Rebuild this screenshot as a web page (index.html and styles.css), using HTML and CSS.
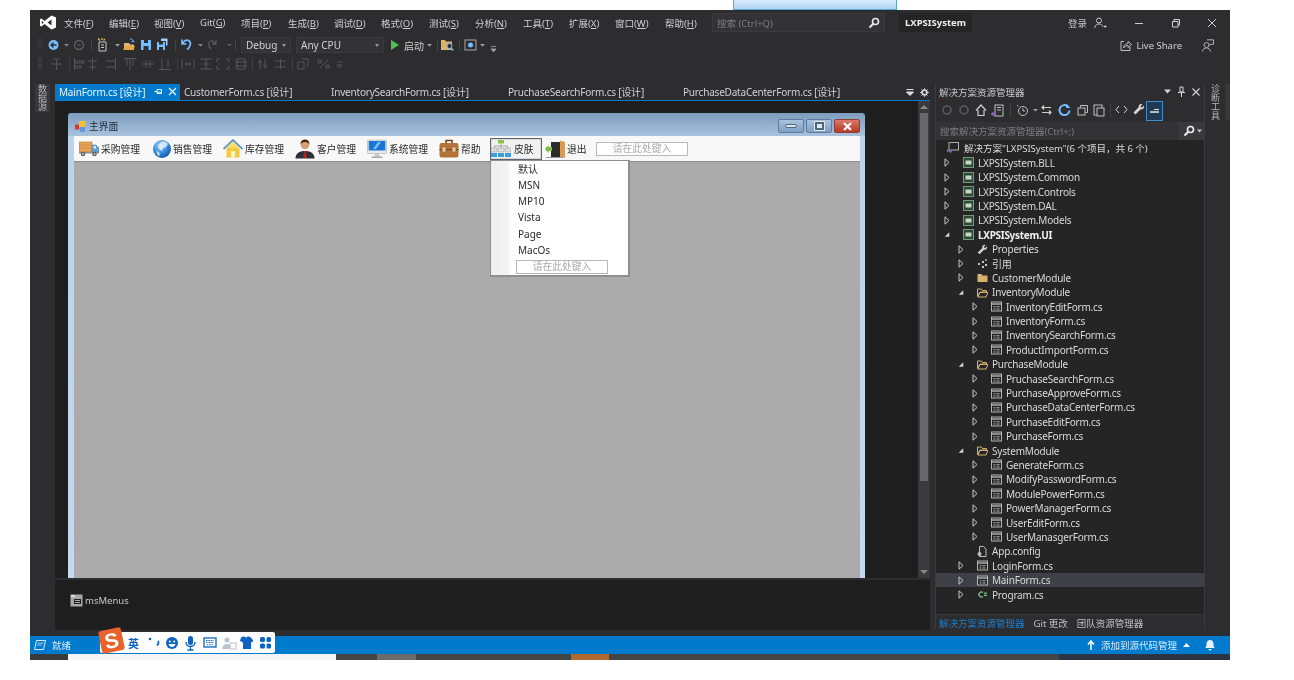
FILE: index.html
```html
<!DOCTYPE html>
<html lang="zh">
<head>
<meta charset="utf-8">
<title>LXPSISystem</title>
<link rel="stylesheet" href="styles.css">
</head>
<body>
<svg class="defs" width="0" height="0">
  <defs>
    <symbol id="closed" viewBox="0 0 6 9"><path d="M1 .8 5 4.500 1 8.200Z" fill="none" stroke="#c8c8c8" stroke-width="1"/></symbol>
    <symbol id="open" viewBox="0 0 8 8"><path d="M7 1V7H1Z" fill="#d8d8d8"/></symbol>
    <symbol id="proj" viewBox="0 0 11 11"><rect x=".5" y=".5" width="10" height="10" fill="#2f4a35" stroke="#6f9b78"/><rect x="2.500" y="3.500" width="6" height="4" fill="#c6d6c8"/></symbol>
    <symbol id="form" viewBox="0 0 11 11"><rect x=".5" y="1" width="10" height="9" fill="#252526" stroke="#b5b5b5"/><path d="M1 3h9" stroke="#b5b5b5" stroke-width="1.400"/><path d="M2.500 5.200h2v1h-2zM2.500 7.500h2v1h-2zM5.500 5.200h3v1h-3zM5.500 7.500h3v1h-3z" fill="#b5b5b5"/></symbol>
    <symbol id="folder" viewBox="0 0 11 10"><path d="M.5 1.500h4l1 1.500h5v6.500h-10Z" fill="#d6b26e"/></symbol>
    <symbol id="folderopen" viewBox="0 0 11 10"><path d="M.5 1.500h4l1 1.500h4v1.500H3L.5 9Z" fill="#252526" stroke="#d6b26e"/><path d="M3 5h8L9 9.500H.8Z" fill="#252526" stroke="#d6b26e"/></symbol>
    <symbol id="wrench" viewBox="0 0 12 12"><path d="M11 2.500 8.800 4.600 7.500 3.400 9.500 1.200C7.500.3 5.200 1.800 5.800 4.300L.8 9.300 2.800 11.200 7.700 6.300C10 7 11.700 4.800 11 2.500Z" fill="#d0d0d0"/></symbol>
  </defs>
</svg>

<div class="topstrip"><div class="chip"></div></div>

<div class="page">
  <div class="vs">
    <header class="menubar">
      <svg class="vslogo" width="18" height="15" viewBox="0 0 18 15"><path d="M12.500.5 17 2.500V12.500L12.500 14.500 5.500 9 2.500 11.500 1 10.700V4.300L2.500 3.500 5.500 6ZM12.500 4.500 8.500 7.500 12.500 10.500ZM2.800 5.800V9.200L4.700 7.500Z" fill="#fff" fill-rule="evenodd"/></svg>
      <nav class="menus">
        <span class="m w45">文件(<u>F</u>)</span><span class="m w45">编辑(<u>E</u>)</span><span class="m w46">视图(<u>V</u>)</span><span class="m w41">Git(<u>G</u>)</span><span class="m w47">项目(<u>P</u>)</span><span class="m w46">生成(<u>B</u>)</span><span class="m w47">调试(<u>D</u>)</span><span class="m w48">格式(<u>O</u>)</span><span class="m w46">测试(<u>S</u>)</span><span class="m w48">分析(<u>N</u>)</span><span class="m w46">工具(<u>T</u>)</span><span class="m w46">扩展(<u>X</u>)</span><span class="m w50">窗口(<u>W</u>)</span><span class="m w47">帮助(<u>H</u>)</span>
      </nav>
      <div class="qsearch"><span>搜索 (Ctrl+Q)</span>
        <svg width="12" height="12" viewBox="0 0 12 12"><circle cx="7.500" cy="4.500" r="3" fill="none" stroke="#e8e8e8" stroke-width="1.600"/><path d="M5.300 6.700 1.500 10.500" stroke="#e8e8e8" stroke-width="2"/></svg>
      </div>
      <div class="solname">LXPSISystem</div>
      <span class="login">登录</span>
      <svg class="usericon" width="13" height="12" viewBox="0 0 13 12"><circle cx="5" cy="3.500" r="2.500" fill="none" stroke="#c8c8c8"/><path d="M.7 11C1 8 3 7 5 7s3.500.8 4.200 3" fill="none" stroke="#c8c8c8"/><path d="M10 9.500h2.500M11.200 8.300v2.500" stroke="#c8c8c8"/></svg>
      <svg class="wmin" width="10" height="10" viewBox="0 0 10 10"><path d="M1 5.500h8" stroke="#d0d0d0"/></svg>
      <svg class="wmax" width="10" height="10" viewBox="0 0 10 10"><path d="M1.500 3.500h5.500v5.500h-5.500zM3 3.500V1.500h5.500V7H7" fill="none" stroke="#d0d0d0"/></svg>
      <svg class="wclose" width="10" height="10" viewBox="0 0 10 10"><path d="M1 1 9 9M9 1 1 9" stroke="#d0d0d0"/></svg>
    </header>

    <div class="tb1">
      <svg class="tb1a" width="206" height="18" viewBox="0 0 206 18">
        <path d="M5 3v12M7 3v12" stroke="#4a4a4d" stroke-dasharray="1 1"/>
        <circle cx="19.500" cy="9" r="5" fill="#75beff"/><path d="M22.500 9h-5M19.500 6.500 17 9l2.500 2.500" stroke="#2d2d30" stroke-width="1.300" fill="none"/>
        <path d="M30 8h5l-2.500 2.500Z" fill="#8a8a8a"/>
        <circle cx="45" cy="9" r="4.500" fill="none" stroke="#5f5f62" stroke-width="1.400"/><path d="M43 9h4" stroke="#5f5f62"/>
        <path d="M57.500 3v12" stroke="#444448"/>
        <path d="M65 6h7v9h-7z" fill="#2d2d30" stroke="#c8c8c8"/><path d="M67 9h3M67 11.500h3" stroke="#c8c8c8"/><path d="M64 2.500l2 2M68 2v2M71 3l-1.500 1.500" stroke="#e6b75f" stroke-width="1.300"/>
        <path d="M81 8h5l-2.500 2.500Z" fill="#a0a0a0"/>
        <path d="M90 7h5l1 1.500h4v5.500H90Z" fill="#dcb67a"/><path d="M96 3c2 0 3 .8 3 2.500M97.500 6l1.500-1 1.500 1" stroke="#75beff" fill="none"/><path d="M89 14l2-4h10l-2 4Z" fill="#e3a93f"/>
        <path d="M107 4h10v10h-10Z" fill="#75beff"/><path d="M110 4h4v3h-4ZM109.500 10h5v4h-5Z" fill="#2d2d30"/>
        <path d="M123 6h8v8h-8Z" fill="#75beff"/><path d="M125 6h4v2.500h-4ZM125 11h4v3h-4Z" fill="#2d2d30"/><path d="M127 2.500h6.500v7H132V5h-5Z" fill="#9ed2ff"/>
        <path d="M141.500 3v12" stroke="#444448"/>
        <path d="M148 3.500v4.500h4.500M148.500 8c1.500-3.500 4-4.500 6-3.500 3 1.500 2.500 6-1.500 9" fill="none" stroke="#75beff" stroke-width="1.700"/>
        <path d="M164 8h5l-2.500 2.500Z" fill="#8a8a8a"/>
        <path d="M182 4v4h-4M181.500 8c-1.500-3-3.500-3.500-5-3-2.500 1-2.500 5 .5 8" fill="none" stroke="#5a5a5d" stroke-width="1.300"/>
        <path d="M193 8h5l-2.500 2.500Z" fill="#5a5a5d"/>
        <path d="M201.500 3v12" stroke="#444448"/>
      </svg>
      <div class="combo debug"><span>Debug</span><i></i></div>
      <div class="combo cpu"><span>Any CPU</span><i></i></div>
      <svg class="play" width="10" height="12" viewBox="0 0 10 12"><path d="M1 1 9 6 1 11Z" fill="#4ec24e"/></svg>
      <span class="start">启动</span>
      <svg class="tb1b" width="64" height="18" viewBox="0 0 64 18">
        <path d="M0 8h5l-2.500 2.500Z" fill="#a0a0a0"/>
        <path d="M10.500 3v12" stroke="#444448"/>
        <path d="M14 4h4l1 1.500h6v8.500H14Z" fill="#d9b26b"/><circle cx="22.500" cy="10" r="2.500" fill="#2d2d30" stroke="#75beff"/><path d="M24 12l2.500 2.500" stroke="#75beff" stroke-width="1.300"/>
        <path d="M32.500 3v12" stroke="#444448"/>
        <rect x="38" y="4" width="11" height="10" fill="#2d2d30" stroke="#a8a8a8"/><circle cx="43.500" cy="9" r="2.500" fill="#75beff"/>
        <path d="M53 8h5l-2.500 2.500Z" fill="#a0a0a0"/>
      </svg>
      <svg class="more" width="7" height="8" viewBox="0 0 7 8"><path d="M1 1.500h5M1 4h5l-2.500 3Z" stroke="#a0a0a0" fill="#a0a0a0" stroke-width=".8"/></svg>
      <div class="liveshare">
        <svg width="12" height="12" viewBox="0 0 12 12"><path d="M4 2.500H1v9h9V8" fill="none" stroke="#c0c0c0"/><path d="M3.500 9C4 5.500 6.500 4.500 8 4.500V2.500L11.500 5.500 8 8.500V6.500C6 6.500 4.500 7.300 3.500 9Z" fill="none" stroke="#c0c0c0"/></svg>
        <span>Live Share</span>
      </div>
      <svg class="feedback" width="13" height="13" viewBox="0 0 13 13"><circle cx="5.500" cy="6" r="2.500" fill="none" stroke="#b0b0b0"/><path d="M1.500 12.500c.3-2.500 2-3.500 4-3.500s3.500 1 4 3.500" fill="none" stroke="#b0b0b0"/><path d="M6 .8h6.500v4.500H9L7.500 7" fill="none" stroke="#b0b0b0"/></svg>
    </div>

    <div class="tb2">
      <svg width="310" height="20" viewBox="0 0 310 20">
        <g stroke="#56565a" fill="none">
          <path d="M5 4v12M7 4v12" stroke-dasharray="1 1"/>
          <path d="M17 10h11M22.500 5v11M19 5h7"/>
          <path d="M35.500 4v12" stroke="#3f3f43"/>
          <path d="M40.500 4v12M41 7h9v2h-9zM41 12h6v2h-6z"/>
          <path d="M58.500 4v12M54 7h9M55 13h7"/>
          <path d="M81.500 4v12M72 7h9M72 13h9"/>
          <path d="M90 4.500h12M96 5v11M93 5v7M99 5v7"/>
          <path d="M108 10h12M112 6v8M116 6v8"/>
          <path d="M125 15.500h12M128 5v10M134 5v8"/>
          <path d="M143.500 4v12" stroke="#3f3f43"/>
          <path d="M148 5v10M160 5v10M151 10h6M153 8l-2 2 2 2M155 8l2 2-2 2"/>
          <path d="M166 5h12M166 15h12M172 5v10M169 10h6"/>
          <path d="M183 5h3M183 5v3M195 5h-3M195 5v3M183 15h3M183 15v-3M195 15h-3M195 15v-3"/>
          <rect x="203" y="5" width="8" height="10"/><path d="M201 8h12M201 12h12"/>
          <path d="M218.500 4v12" stroke="#3f3f43"/>
          <path d="M226 5v10M231 5v10M224 8h4M229 12h4"/>
          <path d="M241 7h11M241 13h11M246.500 5v10"/>
          <path d="M258.500 4v12" stroke="#3f3f43"/>
          <path d="M264 8h6v7h-6zM268 5h6v7h-2"/>
          <path d="M284 6h3v3h-3zM292 11h3v3h-3zM286 14l8-8"/>
          <path d="M303 8h5M303 11h5l-2.500 3Z"/>
        </g>
      </svg>
    </div>

    <div class="workspace">
      <aside class="leftstrip"><span class="vtab">数据源</span></aside>

      <main class="doc">
        <div class="tabs">
          <div class="tab active t1"><span class="tabtext">MainForm.cs [设计]</span>
            <svg class="pin" width="9" height="9" viewBox="0 0 9 9"><path d="M.5 4.500h2.500M3 2.500v4h4.500V2.500ZM3 5.200h4.500" fill="none" stroke="#e8f4ff"/></svg>
            <svg class="x" width="9" height="9" viewBox="0 0 9 9"><path d="M1 1 8 8M8 1 1 8" stroke="#fff" stroke-width="1.100"/></svg>
          </div>
          <div class="tab t2"><span class="tabtext">CustomerForm.cs [设计]</span></div>
          <div class="tab t3"><span class="tabtext">InventorySearchForm.cs [设计]</span></div>
          <div class="tab t4"><span class="tabtext">PruchaseSearchForm.cs [设计]</span></div>
          <div class="tab t5"><span class="tabtext">PurchaseDataCenterForm.cs [设计]</span></div>
          <div class="tabtools">
            <svg width="8" height="8" viewBox="0 0 8 8"><path d="M.5 1.500h7M.5 4h7L4 7.500Z" stroke="#e0e0e0" fill="#e0e0e0"/></svg>
            <svg width="9" height="9" viewBox="0 0 9 9"><circle cx="4.500" cy="4.500" r="2.500" fill="none" stroke="#d8d8d8" stroke-width="1.700"/><path d="M4.500 0v9M0 4.500h9M1.300 1.300l6.400 6.400M7.700 1.300 1.300 7.700" stroke="#d8d8d8" stroke-width=".8"/><circle cx="4.500" cy="4.500" r="1.400" fill="#2d2d30"/></svg>
          </div>
        </div>

        <div class="designer">
          <div class="canvas">
            <section class="form">
              <div class="titlebar">
                <svg width="11" height="11" viewBox="0 0 11 11"><rect x="0" y="3.500" width="4.500" height="5" fill="#d83b2a"/><rect x="4" y="0" width="6.500" height="6.500" fill="#f3c13a"/><rect x="5" y="6" width="5" height="5" fill="#5a9ae0"/></svg>
                <span class="ftitle">主界面</span>
                <div class="wbtns">
                  <div class="wbtn"><i class="bmin"></i></div>
                  <div class="wbtn"><i class="bmax"></i></div>
                  <div class="wbtn red">
                    <svg width="11" height="9" viewBox="0 0 11 9"><path d="M2 1 9 8M9 1 2 8" stroke="#fff" stroke-width="2.200"/></svg>
                  </div>
                </div>
              </div>
              <div class="fbody">
                <div class="strip">
                  <div class="si">
                    <svg width="20" height="18" viewBox="0 0 20 18"><rect x="0" y="2" width="13" height="10" fill="#e7a355" stroke="#b9772f" stroke-width=".6"/><path d="M0 5h13M0 8h13" stroke="#c98a40" stroke-width=".6"/><path d="M13 5h4l3 3v4h-7Z" fill="#6c9fca" stroke="#47779f" stroke-width=".5"/><rect x="14.500" y="6" width="2.500" height="2.500" fill="#d9ecfb"/><rect x="0" y="12" width="20" height="1.500" fill="#8e8e8e"/><circle cx="4" cy="14" r="2.300" fill="#5f6468"/><circle cx="15.500" cy="14" r="2.300" fill="#5f6468"/><circle cx="4" cy="14" r=".9" fill="#ccc"/><circle cx="15.500" cy="14" r=".9" fill="#ccc"/></svg>
                    <span>采购管理</span>
                  </div>
                  <div class="si">
                    <svg width="20" height="20" viewBox="0 0 20 20"><defs><radialGradient id="gl" cx=".4" cy=".3" r=".8"><stop offset="0" stop-color="#a8d8fa"/><stop offset=".55" stop-color="#2f86d8"/><stop offset="1" stop-color="#0d4ea5"/></radialGradient></defs><circle cx="11" cy="10" r="9" fill="url(#gl)"/><path d="M10 3c3-1 6 0 7 2l-2 3-3 1-1 3-3-2-1-3ZM5 12l3 1 1 3-2 1Z" fill="#e2f1fb" opacity=".85"/></svg>
                    <span>销售管理</span>
                  </div>
                  <div class="si">
                    <svg width="20" height="19" viewBox="0 0 20 19"><path d="M3.500 9h13v9.500h-13Z" fill="#f6c93c"/><rect x="8" y="12" width="4" height="6.500" fill="#fdf3c8"/><path d="M.5 10 10 1l9.500 9" fill="none" stroke="#5b97c9" stroke-width="1.800"/><path d="M3 9 10 2.500 17 9" fill="#f9dc6a"/></svg>
                    <span>库存管理</span>
                  </div>
                  <div class="si">
                    <svg width="20" height="20" viewBox="0 0 20 20"><circle cx="10" cy="6" r="4.300" fill="#d6a077"/><path d="M5.500 5.500C5.500 1.500 8 .5 10 .5s4.500 1 4.500 5c-1-1.500-2-2.500-4.500-2.500S6.500 4 5.500 5.500Z" fill="#4a2512"/><path d="M.5 19.500c0-5 3.500-7.500 9.500-7.500s9.500 2.500 9.500 7.500Z" fill="#2c2f36"/><path d="M8 12h4l-1 2 1 5H8l1-5Z" fill="#b32020"/></svg>
                    <span>客户管理</span>
                  </div>
                  <div class="si">
                    <svg width="20" height="20" viewBox="0 0 20 20"><rect x=".5" y="1" width="19" height="13.500" rx="1" fill="#e8e8ea" stroke="#9a9a9a" stroke-width=".5"/><rect x="1.700" y="2" width="16.600" height="9.500" fill="#1877d6"/><path d="M6 10 11 3h3L9 10Z" fill="#7cc0f5"/><path d="M8 15h4l1 2.500H7Z" fill="#c8c8c8"/><rect x="4.500" y="17.500" width="11" height="1.500" fill="#a8a8a8"/></svg>
                    <span>系统管理</span>
                  </div>
                  <div class="si">
                    <svg width="20" height="19" viewBox="0 0 20 19"><path d="M7 4V1.500h6V4" fill="none" stroke="#6e4421" stroke-width="1.500"/><rect x=".5" y="4" width="19" height="14.500" rx="2" fill="#b37338"/><rect x=".5" y="10" width="19" height="1.200" fill="#7f4d21"/><rect x="3.500" y="8.500" width="3" height="4" fill="#e0d4bc"/><rect x="13.500" y="8.500" width="3" height="4" fill="#e0d4bc"/></svg>
                    <span>帮助</span>
                  </div>
                  <div class="si skin">
                    <svg width="20" height="18" viewBox="0 0 20 18"><rect x="7" y="0" width="6" height="3.500" fill="#8cc63f"/><path d="M10 3.500V6M3.500 8V6h13v2M10 6v2" fill="none" stroke="#888" stroke-width=".7"/><rect x="0" y="8" width="6" height="4" fill="#ddd" stroke="#888" stroke-width=".4"/><rect x="7" y="8" width="6" height="4" fill="#ddd" stroke="#888" stroke-width=".4"/><rect x="14" y="8" width="6" height="4" fill="#ddd" stroke="#888" stroke-width=".4"/><rect x="0" y="13" width="6" height="4" fill="#3e9ee0"/><rect x="7" y="13" width="6" height="4" fill="#3e9ee0"/><rect x="14" y="13" width="6" height="4" fill="#3e9ee0"/></svg>
                    <span>皮肤</span>
                  </div>
                  <div class="si">
                    <svg width="20" height="18" viewBox="0 0 20 18"><rect x="6" y="2" width="9" height="15" fill="#2b2b2b"/><path d="M15 0.500 20 2V18L15 17Z" fill="#d99a55"/><rect x="1" y="7" width="6" height="4" fill="#79c143"/><path d="M0 9 3.500 5V13Z" fill="#79c143"/><rect x="1" y="17" width="17" height="1" fill="#999"/></svg>
                    <span>退出</span>
                  </div>
                  <div class="typehere strippos">请在此处键入</div>
                </div>
                <div class="client"></div>
                <div class="dropdown">
                  <div class="dd-item">默认</div>
                  <div class="dd-item">MSN</div>
                  <div class="dd-item">MP10</div>
                  <div class="dd-item">Vista</div>
                  <div class="dd-item">Page</div>
                  <div class="dd-item">MacOs</div>
                  <div class="typehere ddpos">请在此处键入</div>
                </div>
              </div>
            </section>
          </div>
          <div class="vscroll">
            <svg width="8" height="6" viewBox="0 0 8 6"><path d="M0 5 4 1l4 4Z" fill="#888"/></svg>
            <div class="thumb"></div>
            <svg width="8" height="6" viewBox="0 0 8 6"><path d="M0 1 4 5l4-4Z" fill="#888"/></svg>
          </div>
        </div>

        <div class="tray">
          <svg width="13" height="13" viewBox="0 0 13 13"><rect x=".5" y=".5" width="12" height="12" fill="#a8a8a8"/><rect x="1" y="1" width="4" height="2" fill="#d8d8d8"/><rect x="4" y="5" width="7" height="5" fill="#1e1e1e"/><path d="M5 6.500h5M5 8.500h5" stroke="#a8a8a8"/></svg>
          <span>msMenus</span>
        </div>
      </main>

      <aside class="panel">
        <div class="phead">
          <span>解决方案资源管理器</span>
          <div class="dots"></div>
          <svg width="7" height="5" viewBox="0 0 7 5"><path d="M0 .5h7L3.500 4.500Z" fill="#d8d8d8"/></svg>
          <svg width="7" height="11" viewBox="0 0 7 11"><path d="M2 1h3v5H2ZM0 6.500h7M3.500 7v4" fill="none" stroke="#d8d8d8"/></svg>
          <svg width="8" height="8" viewBox="0 0 8 8"><path d="M.5.500l7 7M7.500.500l-7 7" stroke="#d8d8d8" stroke-width="1.100"/></svg>
        </div>
        <div class="ptools">
          <svg width="232" height="22" viewBox="0 0 232 22">
            <circle cx="11" cy="11" r="4" fill="none" stroke="#5f5f62" stroke-width="1.500"/>
            <circle cx="28" cy="11" r="4" fill="none" stroke="#5f5f62" stroke-width="1.500"/>
            <path d="M40 11.500 45 6l5 5.500M42 11v5.500h6V11" fill="none" stroke="#d0d0d0" stroke-width="1.200"/>
            <rect x="59" y="6" width="8" height="11" fill="#2d2d30" stroke="#c0c0c0"/><path d="M61 8.500h4M61 11h4" stroke="#c0c0c0"/><path d="M57 13l2.500 2-2.500 2-2-1.500v-1Z" fill="#8a5cc7"/>
            <path d="M74.500 5v13" stroke="#444448"/>
            <circle cx="87" cy="12" r="4.500" fill="none" stroke="#c0c0c0"/><path d="M87 9.500V12h2M81 6l1.500 1.500" stroke="#c0c0c0" fill="none"/>
            <path d="M97 10h5l-2.500 2.500Z" fill="#a0a0a0"/>
            <path d="M106 8.500h9M108 6.500l-2 2 2 2M115 13.500h-9M113 11.500l2 2-2 2" fill="none" stroke="#d0d0d0" stroke-width="1.200"/>
            <path d="M132 7.500a5 5 0 1 0 1.500 4" fill="none" stroke="#75beff" stroke-width="2"/><path d="M130 4.500v4.500h4.500Z" fill="#75beff"/>
            <rect x="142" y="9" width="7" height="7" fill="none" stroke="#c0c0c0"/><path d="M144.500 8.500V6.500h7v7h-2" fill="none" stroke="#c0c0c0"/>
            <rect x="158" y="6" width="8" height="10" fill="none" stroke="#c0c0c0"/><rect x="161" y="9" width="7" height="8" fill="#2d2d30" stroke="#c0c0c0"/>
            <path d="M174.500 5v13" stroke="#444448"/>
            <path d="M183 8l-3 3.500 3 3.500M188 8l3 3.500-3 3.500" fill="none" stroke="#d0d0d0" transform="translate(0 -1)"/>
            <path d="M208 6.500 205.800 8.700 204.500 7.400 206.500 5.200C204.500 4.300 202 5.800 202.700 8.300L197.500 13.500 199.500 15.500 204.700 10.300C207 11 208.700 8.800 208 6.500Z" fill="#d8d8d8"/>
            <rect x="210.500" y="2.500" width="16" height="19" fill="#1f3a52" stroke="#3f8fd0"/><path d="M214 13h9" stroke="#e8e8e8" stroke-width="1.500"/><path d="M218 10.500h5" stroke="#e8e8e8"/>
          </svg>
        </div>
        <div class="psearch">
          <span>搜索解决方案资源管理器(Ctrl+;)</span>
          <div class="psicon">
            <svg width="12" height="12" viewBox="0 0 12 12"><circle cx="7.500" cy="4.500" r="3" fill="none" stroke="#f0f0f0" stroke-width="1.600"/><path d="M5.300 6.700 1.500 10.500" stroke="#f0f0f0" stroke-width="2"/></svg>
            <svg width="5" height="4" viewBox="0 0 5 4"><path d="M0 .5h5L2.500 3.500Z" fill="#c8c8c8"/></svg>
          </div>
        </div>
        <div class="tree">
          <div class="row solrow"><svg class="ic" width="12" height="11" viewBox="0 0 12 11"><rect x="2" y=".5" width="9.500" height="7.500" fill="none" stroke="#b0b0b0"/><path d="M0 7l2.500 1.700L0 10.500Z" fill="#8a5cc7"/><path d="M2 8.500h3v2H2Z" fill="#8a5cc7"/></svg><span class="t">解决方案"LXPSISystem"(6 个项目，共 6 个)</span></div>
          <div class="row l0"><svg class="cr"><use href="#closed"/></svg><svg class="ic"><use href="#proj"/></svg><span class="t">LXPSISystem.BLL</span></div>
          <div class="row l0"><svg class="cr"><use href="#closed"/></svg><svg class="ic"><use href="#proj"/></svg><span class="t">LXPSISystem.Common</span></div>
          <div class="row l0"><svg class="cr"><use href="#closed"/></svg><svg class="ic"><use href="#proj"/></svg><span class="t">LXPSISystem.Controls</span></div>
          <div class="row l0"><svg class="cr"><use href="#closed"/></svg><svg class="ic"><use href="#proj"/></svg><span class="t">LXPSISystem.DAL</span></div>
          <div class="row l0"><svg class="cr"><use href="#closed"/></svg><svg class="ic"><use href="#proj"/></svg><span class="t">LXPSISystem.Models</span></div>
          <div class="row l0"><svg class="cr"><use href="#open"/></svg><svg class="ic"><use href="#proj"/></svg><span class="t b">LXPSISystem.UI</span></div>
          <div class="row l1"><svg class="cr"><use href="#closed"/></svg><svg class="ic"><use href="#wrench"/></svg><span class="t">Properties</span></div>
          <div class="row l1"><svg class="cr"><use href="#closed"/></svg><svg class="ic" viewBox="0 0 11 11"><path d="M1 5h2v2H1zM5 3h2v2H5zM8 6h2v2H8zM5 8h2v2H5z" fill="#c8c8c8"/><path d="M8 1h2v2H8z" fill="#6a9dc8"/></svg><span class="t">引用</span></div>
          <div class="row l1"><svg class="cr"><use href="#closed"/></svg><svg class="ic"><use href="#folder"/></svg><span class="t">CustomerModule</span></div>
          <div class="row l1"><svg class="cr"><use href="#open"/></svg><svg class="ic"><use href="#folderopen"/></svg><span class="t">InventoryModule</span></div>
          <div class="row l2"><svg class="cr"><use href="#closed"/></svg><svg class="ic"><use href="#form"/></svg><span class="t">InventoryEditForm.cs</span></div>
          <div class="row l2"><svg class="cr"><use href="#closed"/></svg><svg class="ic"><use href="#form"/></svg><span class="t">InventoryForm.cs</span></div>
          <div class="row l2"><svg class="cr"><use href="#closed"/></svg><svg class="ic"><use href="#form"/></svg><span class="t">InventorySearchForm.cs</span></div>
          <div class="row l2"><svg class="cr"><use href="#closed"/></svg><svg class="ic"><use href="#form"/></svg><span class="t">ProductImportForm.cs</span></div>
          <div class="row l1"><svg class="cr"><use href="#open"/></svg><svg class="ic"><use href="#folderopen"/></svg><span class="t">PurchaseModule</span></div>
          <div class="row l2"><svg class="cr"><use href="#closed"/></svg><svg class="ic"><use href="#form"/></svg><span class="t">PruchaseSearchForm.cs</span></div>
          <div class="row l2"><svg class="cr"><use href="#closed"/></svg><svg class="ic"><use href="#form"/></svg><span class="t">PurchaseApproveForm.cs</span></div>
          <div class="row l2"><svg class="cr"><use href="#closed"/></svg><svg class="ic"><use href="#form"/></svg><span class="t">PurchaseDataCenterForm.cs</span></div>
          <div class="row l2"><svg class="cr"><use href="#closed"/></svg><svg class="ic"><use href="#form"/></svg><span class="t">PurchaseEditForm.cs</span></div>
          <div class="row l2"><svg class="cr"><use href="#closed"/></svg><svg class="ic"><use href="#form"/></svg><span class="t">PurchaseForm.cs</span></div>
          <div class="row l1"><svg class="cr"><use href="#open"/></svg><svg class="ic"><use href="#folderopen"/></svg><span class="t">SystemModule</span></div>
          <div class="row l2"><svg class="cr"><use href="#closed"/></svg><svg class="ic"><use href="#form"/></svg><span class="t">GenerateForm.cs</span></div>
          <div class="row l2"><svg class="cr"><use href="#closed"/></svg><svg class="ic"><use href="#form"/></svg><span class="t">ModifyPasswordForm.cs</span></div>
          <div class="row l2"><svg class="cr"><use href="#closed"/></svg><svg class="ic"><use href="#form"/></svg><span class="t">ModulePowerForm.cs</span></div>
          <div class="row l2"><svg class="cr"><use href="#closed"/></svg><svg class="ic"><use href="#form"/></svg><span class="t">PowerManagerForm.cs</span></div>
          <div class="row l2"><svg class="cr"><use href="#closed"/></svg><svg class="ic"><use href="#form"/></svg><span class="t">UserEditForm.cs</span></div>
          <div class="row l2"><svg class="cr"><use href="#closed"/></svg><svg class="ic"><use href="#form"/></svg><span class="t">UserManasgerForm.cs</span></div>
          <div class="row l1 nocr"><svg class="ic" viewBox="0 0 11 11"><path d="M2.500 .5h4l2.500 2.500v7.500h-6.500Z" fill="#252526" stroke="#c0c0c0"/><circle cx="2.500" cy="8" r="2" fill="#c0c0c0"/></svg><span class="t">App.config</span></div>
          <div class="row l1"><svg class="cr"><use href="#closed"/></svg><svg class="ic"><use href="#form"/></svg><span class="t">LoginForm.cs</span></div>
          <div class="row l1 sel"><svg class="cr"><use href="#closed"/></svg><svg class="ic"><use href="#form"/></svg><span class="t">MainForm.cs</span></div>
          <div class="row l1"><svg class="cr"><use href="#closed"/></svg><svg class="ic" viewBox="0 0 11 11"><path d="M6 3.500A2.500 2.500 0 1 0 6 7.500" fill="none" stroke="#7cc48a" stroke-width="1.300"/><path d="M7 3.500h3v1.200H7zM7 5.800h3V7H7z" fill="#7cc48a"/></svg><span class="t">Program.cs</span></div>
        </div>
        <div class="ptabs">
          <span class="pt on">解决方案资源管理器</span>
          <span class="pt">Git 更改</span>
          <span class="pt">团队资源管理器</span>
        </div>
      </aside>

      <aside class="rightstrip"><span class="vtab">诊断工具</span><div class="rbar"></div></aside>
    </div>

    <footer class="status">
      <svg width="12" height="10" viewBox="0 0 12 10"><path d="M2.500.5h9L9.500 9.500H.5Z" fill="none" stroke="#d8ecfa"/><path d="M3.500 3h6M3 5h5" stroke="#d8ecfa" stroke-width=".7"/></svg>
      <span class="ready">就绪</span>
      <div class="statusright">
        <svg width="8" height="10" viewBox="0 0 8 10"><path d="M4 1v9M1 4.500 4 1l3 3.500" fill="none" stroke="#fff" stroke-width="1.500"/></svg>
        <span>添加到源代码管理</span>
        <svg width="7" height="4" viewBox="0 0 7 4"><path d="M0 4 3.500 0 7 4Z" fill="#fff"/></svg>
        <svg class="bell" width="12" height="12" viewBox="0 0 12 12"><path d="M1 9c1.500-1 1.500-2.500 1.500-4C2.500 2.500 4 1 6 1s3.500 1.500 3.500 4c0 1.500 0 3 1.500 4Z" fill="#e8f2fa"/><path d="M4.500 10h3a1.500 1.500 0 0 1-3 0Z" fill="#e8f2fa"/></svg>
      </div>
      <div class="sogou">
        <div class="slogo">S</div>
        <span class="sg-en">英</span>
        <svg width="148" height="16" viewBox="0 0 148 16">
          <circle cx="22" cy="4" r="1.300" fill="#0d62c4"/><path d="M30 6c1 1 .5 3-1 4.500" fill="none" stroke="#0d62c4" stroke-width="1.800"/>
          <circle cx="44" cy="8" r="6" fill="#0d62c4"/><circle cx="41.800" cy="6.500" r="1" fill="#fff"/><circle cx="46.200" cy="6.500" r="1" fill="#fff"/><path d="M40.500 9h7c-.5 2-2 3-3.500 3s-3-1-3.500-3Z" fill="#fff"/>
          <rect x="60" y="1" width="5" height="9" rx="2.500" fill="#0d62c4"/><path d="M58 7c0 6 9 6 9 0M62.500 12v3M59.500 15h6" fill="none" stroke="#0d62c4" stroke-width="1.300"/>
          <rect x="76" y="3" width="12" height="9" fill="none" stroke="#0d62c4" stroke-width="1.300"/><path d="M78 5.500h8M78 7.500h8M79 9.800h6" stroke="#0d62c4" stroke-dasharray="1 .6"/>
          <circle cx="99" cy="5" r="2.500" fill="#b8c4d0"/><path d="M94.500 14c0-4 2-5 4.500-5s3 1 3.500 2v3Z" fill="#b8c4d0"/><rect x="102" y="8" width="6" height="6" fill="none" stroke="#b8c4d0"/>
          <path d="M113 2.500l3 -1.200c1 1.500 3 1.500 4 0l3 1.200 2.500 3.500-2.500 1.500V14h-8V7.500L112 6Z" fill="#0d62c4"/>
          <rect x="132" y="2" width="5" height="5" rx="1.500" fill="#0d62c4"/><rect x="138.500" y="2" width="4.500" height="5" rx="1.500" fill="#0d62c4"/><rect x="132" y="8.500" width="5" height="5" rx="1.500" fill="#0d62c4"/><rect x="138.500" y="8.500" width="4.500" height="5" rx="1.500" fill="#0d62c4"/>
        </svg>
      </div>
    </footer>

    <div class="taskbar">
      <div class="tk a"></div><div class="tk white"></div><div class="tk k2"></div><div class="tk gray"></div><div class="tk c"></div><div class="tk orange"></div><div class="tk d"></div><div class="tk e"></div>
    </div>
  </div>
</div>
</body>
</html>
```

FILE: styles.css
```css
* { box-sizing: border-box; }
html, body { margin: 0; padding: 0; height: 680px; overflow: hidden; background: #fff; }
body {
  font-family: "Noto Sans", "Noto Sans CJK SC", sans-serif;
  font-size: 9.500px;
  color: #d0d0d0;
}
svg { display: block; flex: none; }
.defs { position: absolute; }

.topstrip { height: 10px; padding-left: 733px; }
.chip { width: 164px; height: 10px; background: linear-gradient(#d9ebfb, #aed4f5); border: 1px solid #5aa6cf; border-top: 0; }

.page { padding-left: 30px; }
.vs { width: 1200px; height: 650px; background: #2d2d30; display: flex; flex-direction: column; filter: blur(.35px); }

/* menu bar */
.menubar { height: 26px; display: flex; align-items: center; padding: 0 0 1px 9px; }
.vslogo { margin-right: 7px; }
.menus { display: flex; width: 648px; }
.m { display: block; white-space: nowrap; color: #cfcfcf; }
.w41 { width: 41px; } .w45 { width: 45px; } .w46 { width: 46px; } .w47 { width: 47px; } .w48 { width: 48px; } .w50 { width: 50px; }
.qsearch { width: 173px; height: 19px; background: #333337; border: 1px solid #3a3a3e; display: flex; align-items: center; justify-content: space-between; padding: 0 4px; color: #7d7d80; }
.solname { width: 73px; height: 19px; margin-left: 14px; background: #252526; color: #f0f0f0; font-weight: 700; display: flex; align-items: center; justify-content: center; }
.login { margin-left: 96px; color: #c8c8c8; width: 26px; }
.usericon { margin-right: 27px; }
.wmin { margin-right: 27px; }
.wmax { margin-right: 26px; }

/* toolbars */
.tb1 { height: 18px; display: flex; align-items: center; padding-left: 4px; }
.combo { height: 16px; background: #333337; border: 1px solid #3a3a3e; display: flex; align-items: center; justify-content: space-between; padding: 0 4px; color: #d0d0d0; font-size: 10px; }
.combo i { width: 0; height: 0; border: 2.500px solid transparent; border-top: 3px solid #999; border-bottom: 0; }
.debug { width: 50px; margin-left: 1px; }
.cpu { width: 88px; margin-left: 5px; }
.play { margin-left: 6px; }
.start { margin-left: 4px; width: 22px; color: #cfcfcf; font-size: 10px; }
.tb1b { margin-left: 1px; }
.more { margin-left: -1px; margin-top: 8px; }
.liveshare { display: flex; align-items: center; gap: 4px; margin-left: auto; color: #d0d0d0; }
.feedback { margin-left: 19px; margin-right: 16px; }
.tb2 { height: 20px; padding-left: 4px; }

/* workspace */
.workspace { display: flex; height: 546px; margin-top: 10px; }
.leftstrip { width: 25px; display: flex; justify-content: center; }
.vtab { writing-mode: vertical-rl; white-space: nowrap; color: #b8b8b8; font-size: 9px; line-height: 11px; height: 40px; }
.leftstrip .vtab { background: #38383c; height: 28px; padding: 0 2px; }

.doc { width: 875px; display: flex; flex-direction: column; }
.tabs { height: 17px; display: flex; border-bottom: 1px solid #007acc; flex: none; }
.tab { height: 16px; display: flex; align-items: center; padding: 0 0 2px 4px; white-space: nowrap; color: #d0d0d0; }
.tab.active { background: #007acc; color: #e8f4ff; }
.t1 { width: 125px; }
.t2 { width: 147px; }
.t3 { width: 177px; }
.t4 { width: 175px; }
.t5 { width: 220px; }
.tabtext { display: block; font-size: 10px; letter-spacing: -.2px; }
.pin { margin-left: 9px; }
.x { margin-left: 5px; }
.tabtools { margin-left: auto; display: flex; align-items: center; gap: 6px; padding-right: 1px; height: 16px; }

.designer { height: 477px; display: flex; flex: none; background: #1e1e1e; }
.canvas { flex: 1; padding: 12px 0 0 13px; overflow: hidden; }
.vscroll { width: 12px; background: #3a3a3e; display: flex; flex-direction: column; align-items: center; padding: 3px 0; justify-content: space-between; }
.thumb { width: 8px; height: 368px; background: #68686c; margin-bottom: auto; margin-top: 3px; }

.form { width: 797px; height: 465px; font-size: 9.750px; background: linear-gradient(#7e9cbd, #a9c2de 23px, #bcd3ea 23px, #c4d9ee); border-radius: 3px 3px 0 0; display: flex; flex-direction: column; padding: 0 5px 0 6px; }
.titlebar { height: 23px; display: flex; align-items: center; flex: none; padding: 3px 0 0 1px; }
.ftitle { margin-left: 3px; color: #1c2a38; }
.wbtns { margin-left: auto; display: flex; gap: 2px; }
.wbtn { width: 26px; height: 14px; border: 1px solid #5d7d9f; border-radius: 2px; background: linear-gradient(#a9c3dd, #7f9fc2); display: flex; align-items: center; justify-content: center; }
.wbtn.red { background: linear-gradient(#dc7868, #b73a25); border-color: #8e3f36; }
.bmin { width: 12px; height: 4px; background: #dfe9f3; border: 1px solid #50667c; border-radius: 2px; }
.bmax { width: 9px; height: 8px; border: 2px solid #50667c; background: #dfe9f3; box-shadow: 0 0 0 1px #dfe9f3; }
.fbody { flex: 1; background: #f7f7f7; display: flex; flex-direction: column; position: relative; }
.strip { height: 26px; flex: none; display: flex; align-items: center; gap: 11px; padding-left: 5px; border-bottom: 1px solid #8a8a8a; background: #f8f8f8; }
.si { display: flex; align-items: center; gap: 2px; color: #2a2a2a; white-space: nowrap; }
.skin { border: 1px solid #5c6570; box-shadow: inset 0 0 0 1px #d8d8d8; height: 22px; width: 52px; margin: 0 -8px 0 -1.500px; padding: 0; gap: 3px; background: #f2f2f2; }
.typehere { width: 92px; height: 14px; border: 1px solid #b8b8b8; background: #fff; color: #aaa; display: flex; align-items: center; justify-content: center; line-height: 12px; }
.strippos { margin-left: -1.500px; }
.client { flex: 1; background: #ababab; }
.dropdown { position: absolute; left: 416px; top: 24px; width: 140px; height: 117px; font-size: 10px; background: linear-gradient(90deg, #eee 0, #f4f4f4 18px, #fff 19px); border: 1px solid #8f8f8f; border-width: 1px 2px 2px 1px; padding-left: 27px; }
.dd-item { height: 16.400px; display: flex; align-items: center; color: #2a2a2a; }
.dd-item:first-child { margin-top: -1px; }
.ddpos { margin: 2px 0 0 -2px; font-size: 9.750px; }

.tray { height: 50px; margin-top: 2px; background: #1e1e1e; display: flex; align-items: center; padding: 0 0 10px 15px; gap: 2px; color: #c8c8c8; flex: none; }

/* solution explorer */
.panel { width: 270px; margin-left: 5px; display: flex; flex-direction: column; border: 1px solid #3a3a3e; border-width: 0 1px 0 1px; }
.phead { height: 15px; display: flex; align-items: center; padding: 0 4px 0 3px; gap: 7px; color: #c8c8c8; flex: none; }
.dots { flex: 1; height: 5px; background-image: radial-gradient(#4c4c50 .6px, transparent .7px); background-size: 2px 2px; margin-left: 1px; }
.ptools { height: 23px; flex: none; }
.psearch { height: 18px; flex: none; background: #333337; display: flex; align-items: center; justify-content: space-between; padding-left: 4px; color: #7d7d80; }
.psicon { display: flex; align-items: center; gap: 2px; height: 100%; padding: 0 2px 0 4px; background: #3a3a3e; }
.tree { height: 475px; flex: none; background: #252526; border-bottom: 1px solid #3a3a3e; }
.row { height: 14.400px; display: flex; align-items: center; white-space: nowrap; color: #dadada; }
.cr { width: 6px; height: 9px; margin-right: 13px; }
.ic { width: 11px; height: 11px; margin-right: 4px; }
.t { display: block; font-size: 10px; letter-spacing: -.2px; }
.b { font-weight: 700; color: #f0f0f0; letter-spacing: -.3px; }
.solrow { padding-left: 11px; height: 15.600px; }
.solrow .ic { width: 12px; margin-right: 5px; }
.solrow .t { font-size: 9.500px; letter-spacing: 0; }
.l0 { padding-left: 8px; }
.l1 { padding-left: 22px; }
.l2 { padding-left: 36px; }
.nocr { padding-left: 41px; }
.sel { background: #3f3f46; }
.ptabs { height: 15px; display: flex; flex: none; align-items: center; gap: 9px; padding-left: 3px; color: #c0c0c0; }
.pt.on { color: #1c7fd0; }

.rightstrip { flex: 1; display: flex; justify-content: flex-end; gap: 4px; }
.rbar { width: 5px; height: 36px; background: #38383c; }
.rightstrip .vtab { height: 36px; }

/* status bar */
.status { height: 18px; margin-top: 6px; background: #007acc; display: flex; align-items: center; padding-left: 4px; position: relative; color: #d8ecfa; flex: none; }
.ready { margin-left: 6px; }
.statusright { margin-left: auto; display: flex; align-items: center; padding-right: 14px; gap: 6px; }
.bell { margin-left: 8px; }
.sogou { position: absolute; left: 70px; top: -4px; width: 175px; height: 21px; background: #fff; border-radius: 2px; display: flex; align-items: center; padding-left: 28px; color: #0d62c4; }
.slogo { position: absolute; left: 0; top: -3px; width: 23px; height: 23px; background: #e9622b; border-radius: 3px; transform: rotate(-12deg); color: #fff; font: 900 21px/23px "Liberation Sans", sans-serif; text-align: center; }
.sg-en { font-size: 11px; font-weight: 700; width: 0; white-space: nowrap; }

/* bottom strip */
.taskbar { height: 6px; display: flex; flex: none; background: #444; }
.tk { height: 6px; }
.a { width: 38px; background: #3a3a3c; }
.white { width: 268px; background: #f4f4f4; }
.k2 { width: 41px; background: #444; }
.gray { width: 39px; background: #6b6b6b; }
.c { width: 155px; background: #444; }
.orange { width: 38px; background: #b06a30; }
.d { width: 450px; background: #444; }
.e { flex: 1; background: #2c3444; }
```
